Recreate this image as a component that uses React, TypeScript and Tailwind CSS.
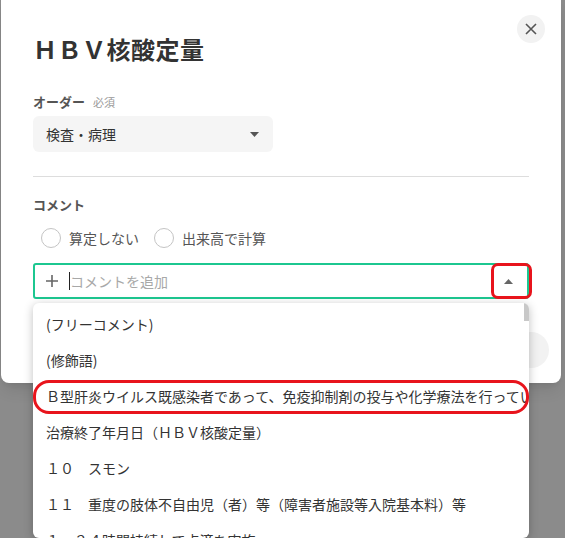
import React from "react";

const items = [
  "(フリーコメント)",
  "(修飾語)",
  "Ｂ型肝炎ウイルス既感染者であって、免疫抑制剤の投与や化学療法を行っている患者",
  "治療終了年月日（ＨＢＶ核酸定量）",
  "１０　スモン",
  "１１　重度の肢体不自由児（者）等（障害者施設等入院基本料）等",
  "１　２４時間持続して点滴を実施",
];

const Radio = ({ label }: { label: string }) => (
  <label className="flex items-center gap-[8px] text-[14px] text-[#555]">
    <span className="w-[20px] h-[20px] rounded-full border-[1.5px] border-[#c4c4c4] bg-white" />
    {label}
  </label>
);

const App = () => {
  return (
    <div
      className="relative w-[565px] h-[538px] overflow-hidden bg-[#8b8b8b]"
      style={{ fontFamily: '"Noto Sans CJK JP", "Noto Sans", sans-serif' }}
    >
      {/* dialog */}
      <div className="relative ml-[1px] w-[560px] h-[383px] bg-white rounded-b-lg shadow-lg px-[32px] pt-[33px]">
        <button className="absolute left-[516px] top-[15px] w-[28px] h-[28px] rounded-full bg-[#f2f2f2] flex items-center justify-center">
          <svg width="14" height="14" viewBox="0 0 14 14" fill="none" stroke="#555" strokeWidth="1.6">
            <path d="M2 2L12 12M12 2L2 12" />
          </svg>
        </button>
        <div className="absolute left-[512px] top-[332px] w-[36px] h-[36px] rounded-full bg-[#f2f2f2]" />

        <h1 className="text-[24px] leading-[32px] font-bold text-[#333] tracking-[0.5px]">ＨＢＶ核酸定量</h1>

        <div className="mt-[27px] flex items-center gap-[8px] h-[20px]">
          <span className="text-[13px] font-bold text-[#555]">オーダー</span>
          <span className="text-[11px] text-[#999]">必須</span>
        </div>
        <div className="mt-[4px] w-[240px] h-[36px] rounded-md bg-[#f5f5f5] flex items-center justify-between pl-[13px] pr-[14px]">
          <span className="text-[14px] text-[#333]">検査・病理</span>
          <svg width="9" height="5" viewBox="0 0 9 5">
            <path d="M0 0H9L4.5 5Z" fill="#555" />
          </svg>
        </div>

        <div className="mt-[24px] h-px bg-[#dddddd]" />

        <div className="mt-[18px] h-[20px] flex items-center text-[13px] font-bold text-[#555]">コメント</div>

        <div className="mt-[11px] h-[24px] flex items-center gap-[15px] pl-[8px]">
          <Radio label="算定しない" />
          <Radio label="出来高で計算" />
        </div>

        <div className="mt-[13px] h-[36px] rounded-[3px] border-2 border-[#1cc790] flex items-center pl-[10px] pr-[14px]">
          <svg width="14" height="14" viewBox="0 0 14 14" stroke="#666" strokeWidth="1.6">
            <path d="M7 1V13M1 7H13" />
          </svg>
          <span className="ml-[10px] w-px h-[18px] bg-[#222]" />
          <span className="flex-1 text-[14px] text-[#a8a8a8]">コメントを追加</span>
          <svg width="9" height="5" viewBox="0 0 9 5">
            <path d="M0 5H9L4.5 0Z" fill="#666" />
          </svg>
        </div>
      </div>

      {/* dropdown menu */}
      <div className="absolute left-[33px] top-[303px] w-[496px] h-[235px] bg-white rounded-md shadow-[0_2px_10px_rgba(0,0,0,0.25)] overflow-hidden pt-[3px]">
        <div className="absolute right-0 top-0 w-[5px] h-[18px] bg-[#c8c8c8]" />
        {items.map((item) => (
          <div
            key={item}
            className="h-[36px] flex items-center px-[13px] text-[14px] text-[#333] whitespace-nowrap overflow-hidden"
          >
            {item}
          </div>
        ))}
      </div>

      {/* annotations */}
      <div className="absolute left-[491px] top-[263px] w-[41px] h-[36px] rounded-[7px] border-[3px] border-[#e8141c]" />
      <div className="absolute left-[33px] top-[380px] w-[496px] h-[34px] rounded-[16px] border-[3px] border-[#e8141c]" />
    </div>
  );
};

export default App;
